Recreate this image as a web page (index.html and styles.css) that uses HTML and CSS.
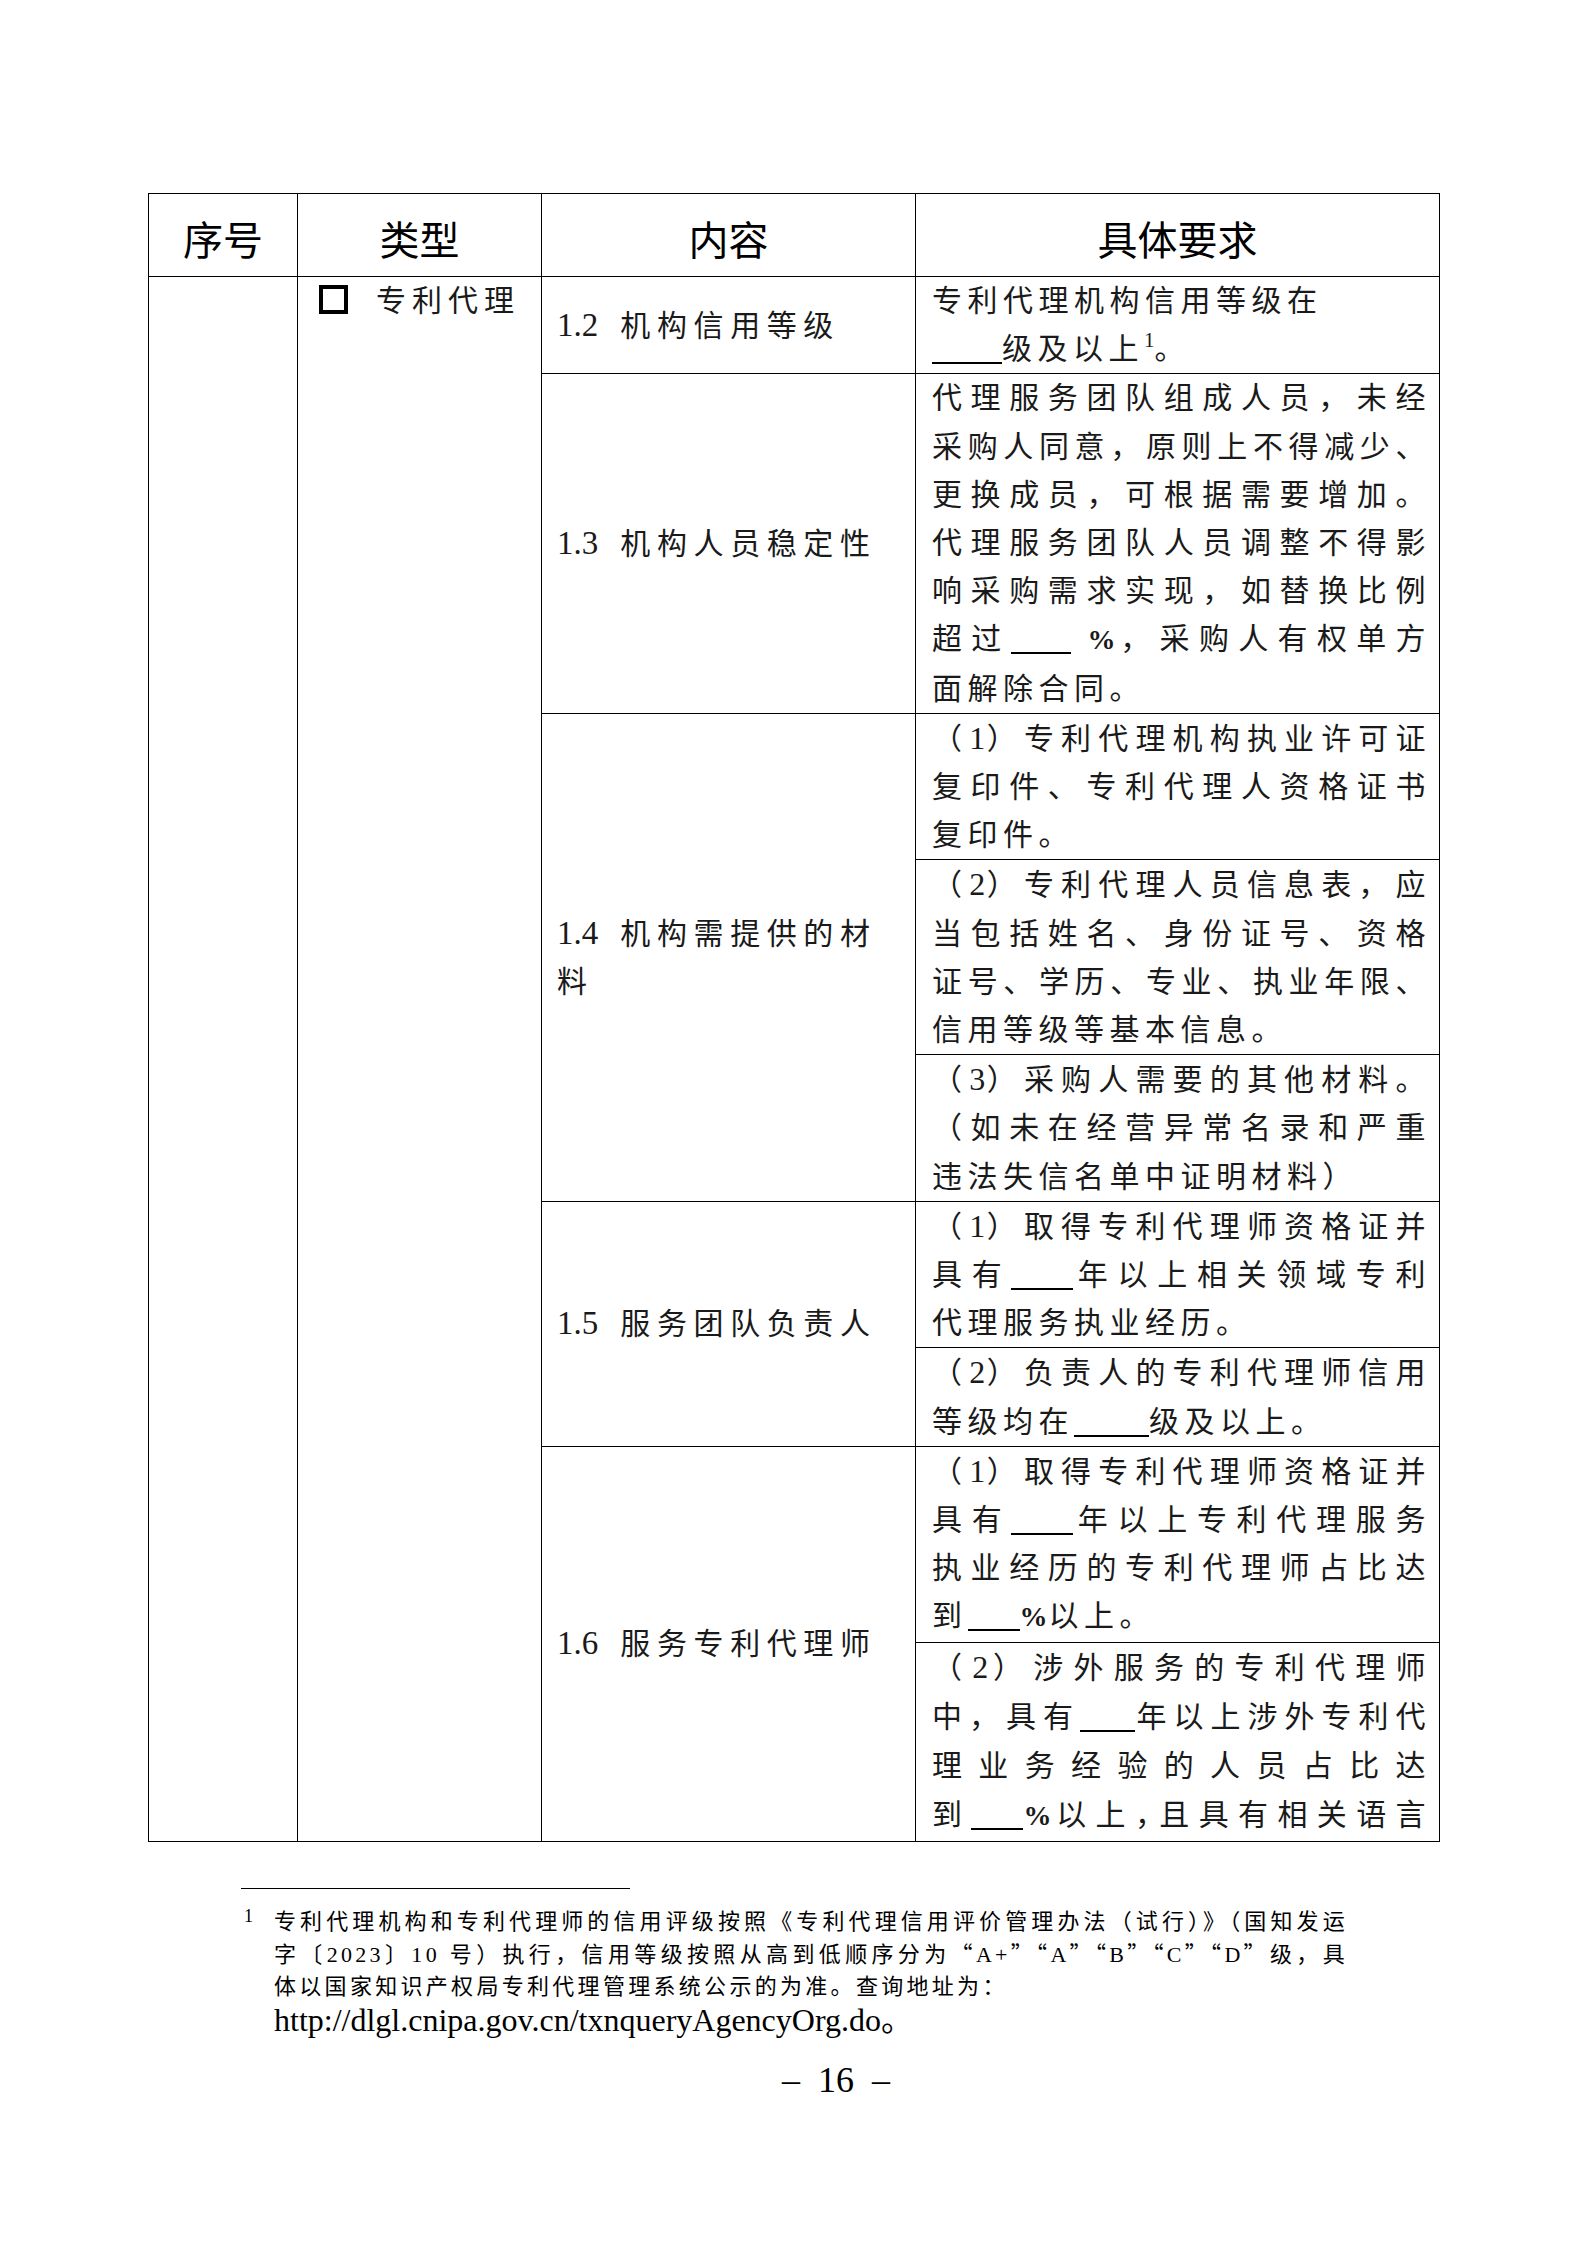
FILE: index.html
```html
<!DOCTYPE html>
<html lang="zh-CN">
<head>
<meta charset="utf-8">
<title>专利代理</title>
<link rel="stylesheet" href="styles.css">
</head>
<body>
<div class="sheet">
  <div class="tbl">
    <div class="hrow">
      <div class="hc c1">序号</div>
      <div class="hc c2">类型</div>
      <div class="hc c3">内容</div>
      <div class="hc c4">具体要求</div>
    </div>
    <div class="tbody">
      <div class="cell c1"></div>
      <div class="cell c2 type"><span class="box"></span>专利代理</div>
      <div class="groups">

        <div class="grp">
          <div class="cell c3 item"><span><span class="num">1.2</span> 机构信用等级</span></div>
          <div class="reqs">
            <div class="cell req">
              <span class="l e">专利代理机构信用等级在</span>
              <span class="l e"><span class="bl w70"></span>级及以上<sup class="fnref">1</sup>。</span>
            </div>
          </div>
        </div>

        <div class="grp">
          <div class="cell c3 item"><span><span class="num">1.3</span> 机构人员稳定性</span></div>
          <div class="reqs">
            <div class="cell req">
              <span class="l">代理服务团队组成人员，未经</span>
              <span class="l">采购人同意，原则上不得减少、</span>
              <span class="l">更换成员，可根据需要增加。</span>
              <span class="l">代理服务团队人员调整不得影</span>
              <span class="l">响采购需求实现，如替换比例</span>
              <span class="l">超过<span class="bl w60"></span> <b class="pct">%</b>，采购人有权单方</span>
              <span class="l e">面解除合同。</span>
            </div>
          </div>
        </div>

        <div class="grp">
          <div class="cell c3 item"><span><span class="num">1.4</span> 机构需提供的材<br>料</span></div>
          <div class="reqs">
            <div class="cell req">
              <span class="l">（<span class="d">1</span>）专利代理机构执业许可证</span>
              <span class="l">复印件、专利代理人资格证书</span>
              <span class="l e">复印件。</span>
            </div>
            <div class="cell req">
              <span class="l">（<span class="d">2</span>）专利代理人员信息表，应</span>
              <span class="l">当包括姓名、身份证号、资格</span>
              <span class="l">证号、学历、专业、执业年限、</span>
              <span class="l e">信用等级等基本信息。</span>
            </div>
            <div class="cell req">
              <span class="l">（<span class="d">3</span>）采购人需要的其他材料。</span>
              <span class="l">（如未在经营异常名录和严重</span>
              <span class="l e">违法失信名单中证明材料）</span>
            </div>
          </div>
        </div>

        <div class="grp">
          <div class="cell c3 item"><span><span class="num">1.5</span> 服务团队负责人</span></div>
          <div class="reqs">
            <div class="cell req">
              <span class="l">（<span class="d">1</span>）取得专利代理师资格证并</span>
              <span class="l">具有<span class="bl w62"></span>年以上相关领域专利</span>
              <span class="l e">代理服务执业经历。</span>
            </div>
            <div class="cell req">
              <span class="l">（<span class="d">2</span>）负责人的专利代理师信用</span>
              <span class="l e">等级均在<span class="bl w75"></span>级及以上。</span>
            </div>
          </div>
        </div>

        <div class="grp">
          <div class="cell c3 item"><span><span class="num">1.6</span> 服务专利代理师</span></div>
          <div class="reqs">
            <div class="cell req">
              <span class="l">（<span class="d">1</span>）取得专利代理师资格证并</span>
              <span class="l">具有<span class="bl w62"></span>年以上专利代理服务</span>
              <span class="l">执业经历的专利代理师占比达</span>
              <span class="l e">到<span class="bl w52"></span><b class="pct">%</b>以上。</span>
            </div>
            <div class="cell req wide">
              <span class="l">（<span class="d">2</span>）涉外服务的专利代理师</span>
              <span class="l">中，具有<span class="bl w55"></span>年以上涉外专利代</span>
              <span class="l">理业务经验的人员占比达</span>
              <span class="l">到<span class="bl w52"></span><b class="pct">%</b>以上<span class="h">，</span>且具有相关语言</span>
            </div>
          </div>
        </div>

      </div>
    </div>
  </div>

  <div class="notes">
    <div class="rule"></div>
    <div class="fn">
      <span class="fnmark">1</span>
      <div class="fntext">
        <span class="fl">专利代理机构和专利代理师的信用评级按照《专利代理信用评价管理办法（试行）》（国知发运</span>
        <span class="fl">字〔2023〕10 号）执行，信用等级按照从高到低顺序分为<span class="q">“</span>A+<span class="q">”“</span>A<span class="q">”“</span>B<span class="q">”“</span>C<span class="q">”“</span>D<span class="q">”</span>级，具</span>
        <span class="fl e">体以国家知识产权局专利代理管理系统公示的为准。查询地址为：</span>
        <span class="url">http://dlgl.cnipa.gov.cn/txnqueryAgencyOrg.do。</span>
      </div>
    </div>
    <div class="pageno">–&nbsp;&nbsp;16&nbsp;&nbsp;–</div>
  </div>
</div>
</body>
</html>
```

FILE: styles.css
```css
* {
  box-sizing: border-box;
  margin: 0;
  padding: 0;
}

html, body {
  background: #fff;
}

body {
  width: 1587px;
  min-height: 2245px;
  font-family: "Liberation Serif", "Noto Sans CJK SC", serif;
  color: #000;
}

.sheet {
  padding-top: 193px;
}

/* ---------- table ---------- */
.tbl {
  margin-left: 148px;
  width: 1292px;
  border-left: 1px solid #000;
  border-top: 1px solid #000;
}

.hrow {
  display: flex;
  height: 83px;
}

.hc {
  display: flex;
  align-items: center;
  justify-content: center;
  padding-top: 6px;
  border-right: 1px solid #000;
  border-bottom: 1px solid #000;
  font-family: "Noto Sans CJK SC", sans-serif;
  font-size: 40px;
  color: #000;
}

.c1 { width: 149px; }
.c2 { width: 244px; }
.c3 { width: 374px; }
.c4 { width: 524px; }

.tbody {
  display: flex;
}

.cell {
  border-right: 1px solid #000;
  border-bottom: 1px solid #000;
  color: #1a1a1a;
}

.type {
  padding-left: 21px;
  font-size: 30px;
  line-height: 48.2px;
  letter-spacing: 6px;
  white-space: nowrap;
}

.box {
  display: inline-block;
  width: 29px;
  height: 29px;
  border: 4px solid #000;
  vertical-align: -3px;
  margin-right: 28px;
}

.groups {
  display: flex;
  flex-direction: column;
  width: 898px;
}

.grp {
  display: flex;
}

.item {
  display: flex;
  align-items: center;
  padding-left: 15px;
  font-size: 30px;
  line-height: 48.2px;
  letter-spacing: 6.6px;
  white-space: nowrap;
}

.num {
  font-size: 33px;
  letter-spacing: 0;
  margin-right: 8px;
}

.reqs {
  display: flex;
  flex-direction: column;
  width: 524px;
}

.req {
  padding: 0 8px 0 16px;
  font-size: 30px;
  line-height: 48.2px;
  letter-spacing: 5.5px;
}

.req.wide {
  line-height: 49.2px;
}

.l {
  display: block;
  white-space: nowrap;
  text-align: justify;
  text-align-last: justify;
}

.l.e {
  text-align-last: left;
}

.bl {
  display: inline-block;
  height: 30px;
  border-bottom: 2px solid #000;
  vertical-align: -5px;
}

.w52 { width: 52px; }
.w55 { width: 55px; }
.w60 { width: 60px; }
.w62 { width: 62px; }
.w70 { width: 70px; }
.w75 { width: 75px; }

.d {
  font-size: 32px;
  letter-spacing: 0;
}

.pct {
  font-weight: bold;
  font-size: 28px;
  letter-spacing: 1px;
}

.h {
  font-feature-settings: "halt";
}

.fnref {
  font-size: 21px;
  letter-spacing: 0;
  vertical-align: 12px;
  line-height: 0;
}

/* ---------- footnote ---------- */
.notes {
  margin-left: 241px;
  width: 1190px;
  padding-top: 46px;
}

.rule {
  width: 389px;
  border-top: 1px solid #000;
}

.fn {
  display: flex;
  margin-top: 17px;
}

.fnmark {
  width: 33px;
  padding-left: 3px;
  font-size: 18px;
  line-height: 20px;
}

.fntext {
  width: 1074px;
  font-size: 22px;
  line-height: 31.5px;
  letter-spacing: 3.3px;
}

.fl {
  display: block;
  white-space: nowrap;
  text-align: justify;
  text-align-last: justify;
}

.fl.e {
  text-align-last: left;
}

.q {
  font-family: "Noto Sans CJK SC", sans-serif;
}

.url {
  display: block;
  font-size: 32px;
  line-height: 36px;
  letter-spacing: 0;
  white-space: nowrap;
}

.pageno {
  margin-top: 22px;
  text-align: center;
  font-size: 36px;
  line-height: 40px;
}
```
